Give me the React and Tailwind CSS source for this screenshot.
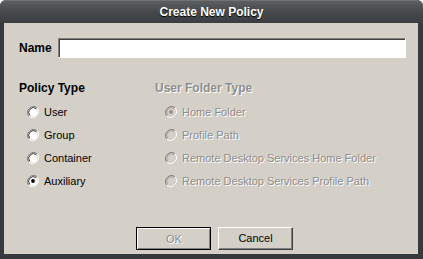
const policyTypes = [
  { label: "User", checked: false },
  { label: "Group", checked: false },
  { label: "Container", checked: false },
  { label: "Auxiliary", checked: true },
];

const folderTypes = [
  { label: "Home Folder", checked: true },
  { label: "Profile Path", checked: false },
  { label: "Remote Desktop Services Home Folder", checked: false },
  { label: "Remote Desktop Services Profile Path", checked: false },
];

function Radio({ checked, disabled }) {
  return (
    <svg width="12" height="12" viewBox="0 0 12 12" className="shrink-0">
      <path d="M10.2 1.8 A6 6 0 0 0 1.8 10.2" fill="none" stroke="#808080" strokeWidth="1" />
      <path d="M1.8 10.2 A6 6 0 0 0 10.2 1.8" fill="none" stroke="#ffffff" strokeWidth="1" />
      <circle cx="6" cy="6" r="4.6" fill={disabled ? "#d4d0c8" : "#ffffff"} />
      <path d="M9.3 2.7 A4.7 4.7 0 0 0 2.7 9.3" fill="none" stroke={disabled ? "#a0a0a0" : "#404040"} strokeWidth="1" />
      {checked && <circle cx="6" cy="6" r="1.9" fill={disabled ? "#8d8d8d" : "#000000"} />}
    </svg>
  );
}

export default function App() {
  return (
    <div className="w-[423px] h-[259px] bg-[#363a3c] rounded-t-[6px] flex flex-col font-['Liberation_Sans',Arial,sans-serif] text-[11px] text-black">
      <div className="h-[23px] shrink-0 rounded-t-[6px] bg-gradient-to-b from-[#5b5f61] via-[#45494b] to-[#3a3e40] border-t border-[#6e7274] flex items-center justify-center">
        <span className="text-white font-bold text-[12px] [text-shadow:0_1px_1px_#000]">
          Create New Policy
        </span>
      </div>

      <div className="ml-[4px] mr-[5px] mb-[5px] flex-1 bg-[#d4d0c8] flex flex-col pl-[15px] pr-[13px] pt-[15px]">
        <div className="flex items-center gap-[5px]">
          <span className="font-bold text-[12px] w-[34px]">Name</span>
          <div className="flex-1 h-[19px] bg-white border-t border-l border-[#808080] shadow-[inset_1px_1px_0_#404040,1px_1px_0_#ffffff]" />
        </div>

        <div className="flex mt-[24px]">
          <div className="w-[136px] flex flex-col">
            <span className="font-bold text-[12px] leading-[14px]">Policy Type</span>
            <div className="flex flex-col gap-[9px] mt-[10px] pl-[8px]">
              {policyTypes.map((p) => (
                <div key={p.label} className="flex items-center gap-[5px] h-[14px]">
                  <Radio checked={p.checked} />
                  <span>{p.label}</span>
                </div>
              ))}
            </div>
          </div>
          <div className="flex flex-col">
            <span className="font-bold text-[12px] leading-[14px] text-[#8d8d8d] [text-shadow:1px_1px_0_#ffffff]">
              User Folder Type
            </span>
            <div className="flex flex-col gap-[9px] mt-[10px] pl-[10px]">
              {folderTypes.map((f) => (
                <div key={f.label} className="flex items-center gap-[5px] h-[14px]">
                  <Radio checked={f.checked} disabled />
                  <span className="text-[#8d8d8d] [text-shadow:1px_1px_0_#ffffff]">{f.label}</span>
                </div>
              ))}
            </div>
          </div>
        </div>

        <div className="flex-1" />

        <div className="flex justify-center gap-[7px] mb-[4px] pl-[5px]">
          <div className="w-[75px] h-[23px] border border-black flex">
            <div className="flex-1 flex items-center justify-center border-t border-l border-white shadow-[inset_-1px_-1px_0_#808080]">
              <span className="text-[#8d8d8d] [text-shadow:1px_1px_0_#ffffff]">OK</span>
            </div>
          </div>
          <div className="w-[75px] h-[23px] flex border-t border-l border-white border-b border-r border-b-[#404040] border-r-[#404040]">
            <div className="flex-1 flex items-center justify-center shadow-[inset_-1px_-1px_0_#808080]">
              <span>Cancel</span>
            </div>
          </div>
        </div>
      </div>
    </div>
  );
}
